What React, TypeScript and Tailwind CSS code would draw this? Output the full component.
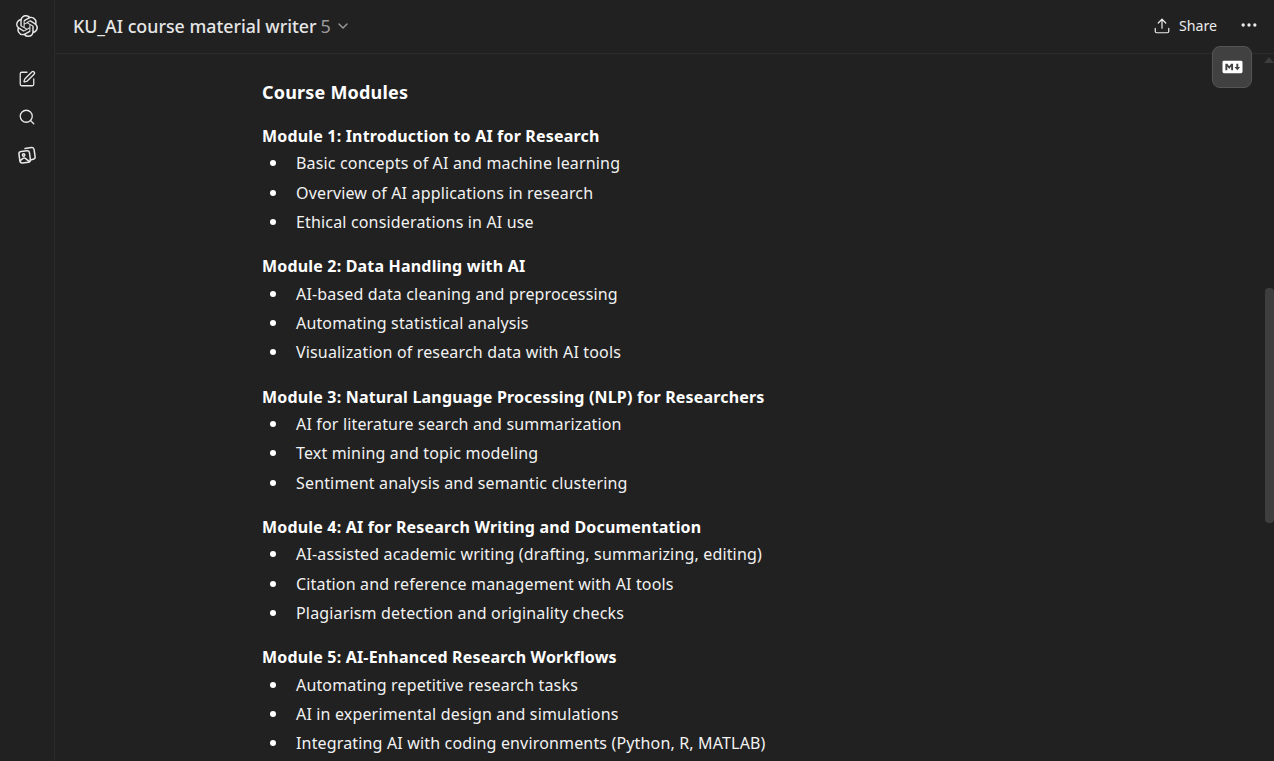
import { ChevronDown, Ellipsis, Search, SquarePen, Upload } from "lucide-react";
import { SiMarkdown, SiOpenai } from "react-icons/si";

const modules = [
  {
    title: "Module 1: Introduction to AI for Research",
    items: [
      "Basic concepts of AI and machine learning",
      "Overview of AI applications in research",
      "Ethical considerations in AI use",
    ],
  },
  {
    title: "Module 2: Data Handling with AI",
    items: [
      "AI-based data cleaning and preprocessing",
      "Automating statistical analysis",
      "Visualization of research data with AI tools",
    ],
  },
  {
    title: "Module 3: Natural Language Processing (NLP) for Researchers",
    items: [
      "AI for literature search and summarization",
      "Text mining and topic modeling",
      "Sentiment analysis and semantic clustering",
    ],
  },
  {
    title: "Module 4: AI for Research Writing and Documentation",
    items: [
      "AI-assisted academic writing (drafting, summarizing, editing)",
      "Citation and reference management with AI tools",
      "Plagiarism detection and originality checks",
    ],
  },
  {
    title: "Module 5: AI-Enhanced Research Workflows",
    items: [
      "Automating repetitive research tasks",
      "AI in experimental design and simulations",
      "Integrating AI with coding environments (Python, R, MATLAB)",
    ],
  },
];

const LibraryIcon = () => (
  <svg width="20" height="20" viewBox="0 0 20 20" fill="none" stroke="currentColor" strokeWidth="1.5" strokeLinejoin="round" strokeLinecap="round">
    <rect x="2.4" y="6" width="10.6" height="11.6" rx="2.4" transform="rotate(-8 8 12)" />
    <path d="M8 3.6l6.4-1a2.4 2.4 0 0 1 2.7 2l1 7a2.4 2.4 0 0 1-1.9 2.7l-3 .6" />
    <circle cx="6.6" cy="10" r="1.2" />
    <path d="M3.2 15.6l2.8-2.2a2 2 0 0 1 2.4 0l4 3.2" />
  </svg>
);

export default function App() {
  return (
    <div className="relative flex h-[761px] w-[1274px] overflow-hidden bg-[#212121] font-['Noto_Sans',sans-serif] text-[#ececec]">
      <aside className="flex w-[55px] shrink-0 flex-col items-center border-r border-[#2a2a2a] pt-[15px] text-[#e8e8e8]">
        <SiOpenai className="h-[22px] w-[22px]" />
        <SquarePen className="mt-[33px] h-[18px] w-[18px]" strokeWidth={1.7} />
        <Search className="mt-[20px] h-[18px] w-[18px]" strokeWidth={1.7} />
        <div className="mt-[19px] h-5 w-5">
          <LibraryIcon />
        </div>
      </aside>

      <div className="flex min-w-0 flex-1 flex-col">
        <header className="flex h-[54px] shrink-0 items-center border-b border-[#2c2c2c] pb-[1px] pl-[18px] pr-[15px]">
          <span className="text-[17.8px] font-medium text-[#e6e6e6]">KU_AI course material writer</span>
          <span className="ml-1 text-[18px] text-[#9b9b9b]">5</span>
          <ChevronDown className="ml-[4px] h-4 w-4 text-[#9b9b9b]" />
          <div className="ml-auto flex items-center text-[#ececec]">
            <Upload className="h-[18px] w-[18px]" strokeWidth={1.6} />
            <span className="ml-2 text-[14.2px]">Share</span>
            <Ellipsis className="-mt-[1px] ml-[22px] h-5 w-5" />
          </div>
        </header>

        <main className="flex-1 overflow-hidden pl-[207px] pt-6">
          <h2 className="text-[18px] font-bold leading-[28px] tracking-[0.2px] text-white">Course Modules</h2>
          {modules.map((m) => (
            <section key={m.title} className="mt-[15.6px] first-of-type:mt-4">
              <h3 className="text-[16px] font-bold leading-[28px] tracking-[0.18px] text-white">{m.title}</h3>
              <ul>
                {m.items.map((item) => (
                  <li key={item} className="flex h-[29.3px] items-center text-[16px] tracking-[0.16px] text-[#f2f2f2] first:-mt-[1.2px]">
                    <span className="ml-[8px] h-[6px] w-[6px] shrink-0 rounded-full bg-white" />
                    <span className="ml-[20px] whitespace-nowrap">{item}</span>
                  </li>
                ))}
              </ul>
            </section>
          ))}
        </main>
      </div>

      {/* markdown copy button floats over the page */}
      <div className="absolute left-[1212px] top-[46px] flex h-[42px] w-[40px] items-center justify-center rounded-[8px] border border-[#555] bg-[#414141]">
        <SiMarkdown className="h-[20px] w-[23px] text-white" />
      </div>

      {/* scrollbar */}
      <div className="absolute right-0 top-[54px] h-full w-[10px]">
        <div className="mx-auto mt-[3px] h-0 w-0 border-x-[5px] border-b-[6px] border-x-transparent border-b-[#3d3d3d]" />
        <div className="absolute left-[1px] top-[234px] h-[235px] w-[9px] rounded-[4px] bg-[#3e3e3e]" />
      </div>
    </div>
  );
}
